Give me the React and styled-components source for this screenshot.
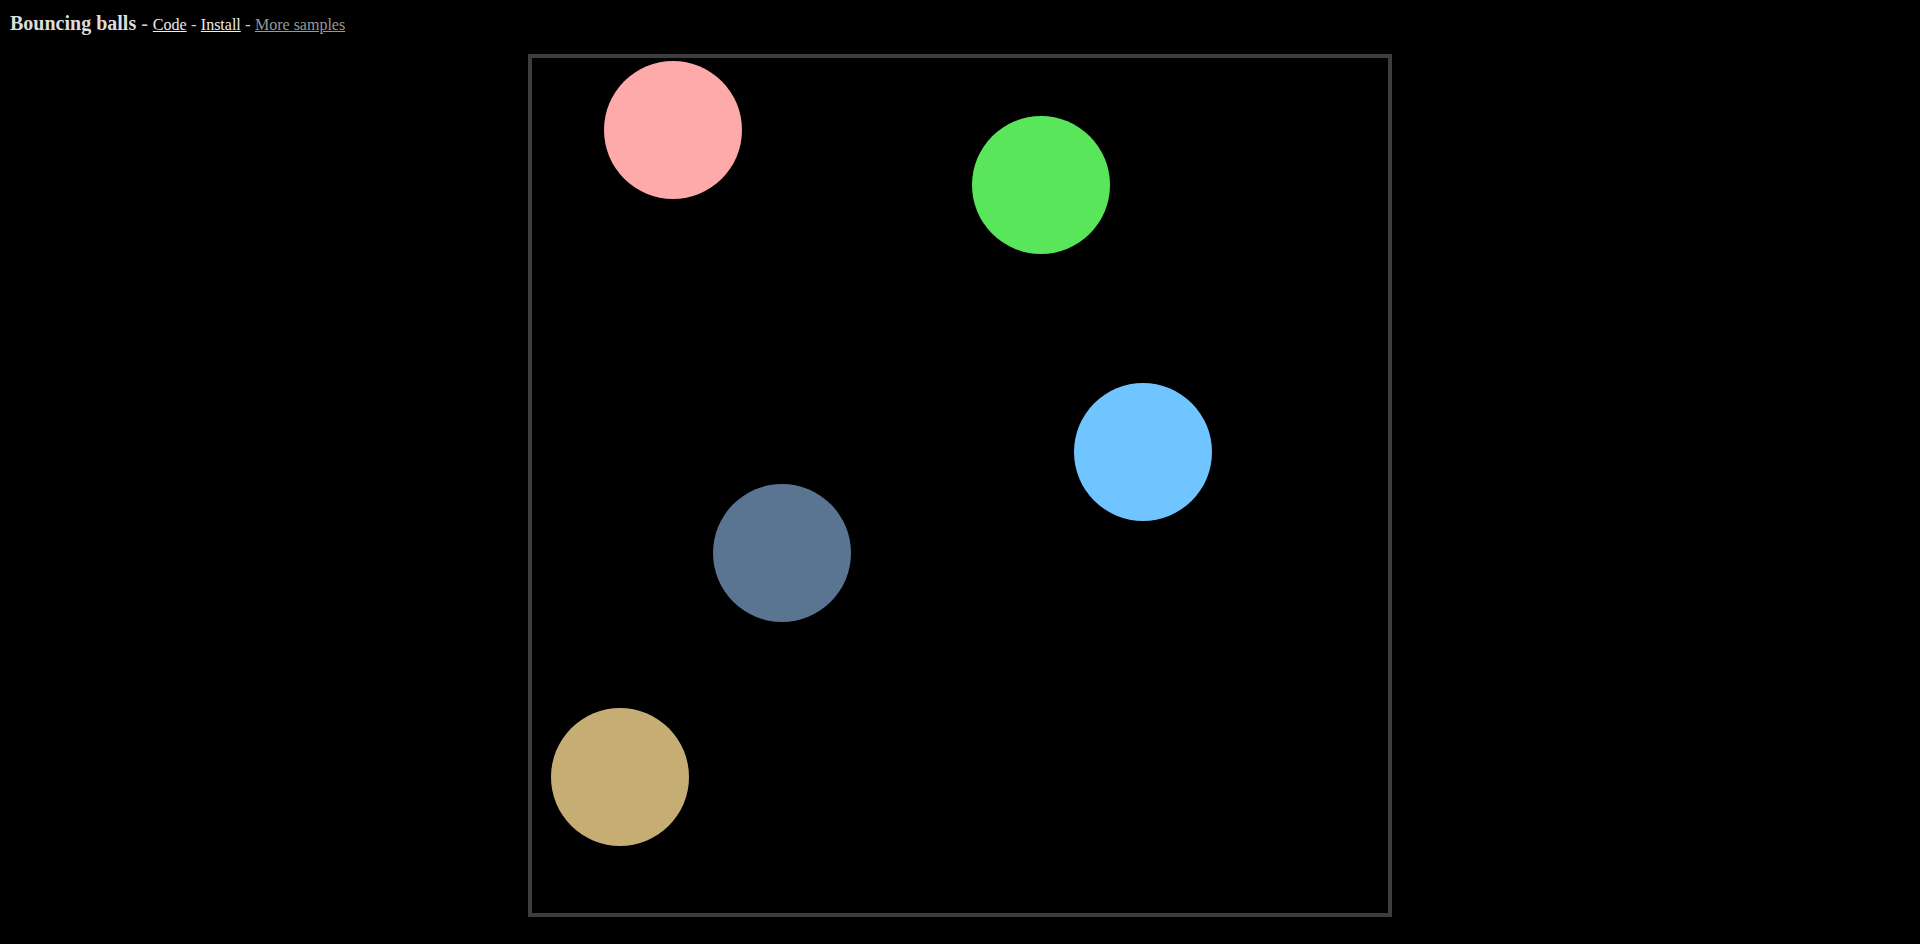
import React from "react";
import styled, { createGlobalStyle } from "styled-components";

const GlobalStyle = createGlobalStyle`
  html, body {
    margin: 0;
    padding: 0;
    background: #000;
  }
  body {
    font-family: "Liberation Serif", "Times New Roman", serif;
    color: #ccc;
  }
`;

const Page = styled.div`
  display: flex;
  flex-direction: column;
  padding: 12px 10px 8px;
`;

const Header = styled.div`
  font-size: 16px;
  line-height: 23px;
  color: #ccc;
`;

const Title = styled.span`
  font-size: 20px;
  font-weight: bold;
  color: #ddd;
`;

const Sep = styled.span`
  font-size: ${({ $big }) => ($big ? "20px" : "17px")};
  color: #ccc;
`;

const NavLink = styled.a`
  color: ${({ $muted }) => ($muted ? "#999" : "#eee")};
  text-decoration: underline;
`;

const Arena = styled.div`
  position: relative;
  align-self: center;
  margin-top: 18px;
  width: 856px;
  height: 855px;
  border: 4px solid #3d3d3d;
  background: #000;
`;

const Ball = styled.div`
  position: absolute;
  width: 138px;
  height: 138px;
  border-radius: 50%;
  background: ${({ $color }) => $color};
`;

const balls = [
  { color: "#ffaaaa", x: 71.5, y: 2.5 },
  { color: "#5ae65a", x: 439.5, y: 58 },
  { color: "#70c4ff", x: 541.5, y: 324.5 },
  { color: "#5a7591", x: 180.5, y: 426 },
  { color: "#c5ad74", x: 19, y: 650 },
];

export default function App() {
  return (
    <>
      <GlobalStyle />
      <Page>
        <Header>
          <Title>Bouncing balls</Title>
          <Sep $big> - </Sep>
          <NavLink href="#">Code</NavLink>
          <Sep> - </Sep>
          <NavLink href="#">Install</NavLink>
          <Sep> - </Sep>
          <NavLink href="#" $muted>
            More samples
          </NavLink>
        </Header>
        <Arena>
          {balls.map((b, i) => (
            <Ball key={i} $color={b.color} style={{ left: b.x, top: b.y }} />
          ))}
        </Arena>
      </Page>
    </>
  );
}
